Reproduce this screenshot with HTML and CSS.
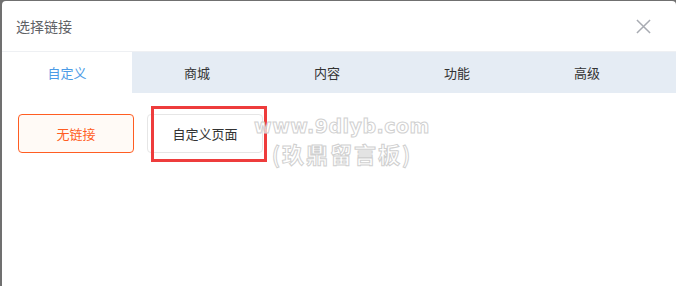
FILE: index.html
```html
<!DOCTYPE html>
<html lang="zh-CN">
<head>
    <meta charset="UTF-8">
    <title>选择链接</title>
    <link rel="stylesheet" href="styles.css">
</head>
<body>
    <div class="dialog">
        <div class="dialog-header">
            <span class="dialog-title">选择链接</span>
            <svg class="close" width="16" height="16" viewBox="0 0 16 16">
                <path d="M1 1 L15 15 M15 1 L1 15" stroke="#a8abb2" stroke-width="1.6" fill="none"/>
            </svg>
        </div>
        <div class="tabs">
            <div class="tab active">自定义</div>
            <div class="tab">商城</div>
            <div class="tab">内容</div>
            <div class="tab">功能</div>
            <div class="tab">高级</div>
        </div>
        <div class="links">
            <div class="link-btn selected">无链接</div>
            <div class="link-btn">自定义页面</div>
        </div>
        <div class="mark-box"></div>
        <div class="watermark">
            <div class="wm-url">www.9dlyb.com</div>
            <div class="wm-name">(玖鼎留言板)</div>
        </div>
    </div>
</body>
</html>
```

FILE: styles.css
```css
body {
    margin: 0;
    background-color: #707070;
    font-family: "Noto Sans CJK SC", "Noto Sans", sans-serif;
    height: 286px;
    overflow: hidden;
}
.dialog {
    position: relative;
    margin: 1px 0 0 2px;
    height: 285px;
    background-color: #fff;
    border-radius: 4px 4px 0 0;
}
.dialog-header {
    height: 50px;
    display: flex;
    align-items: center;
    justify-content: space-between;
    padding: 0 25px 0 14px;
    border-bottom: 1px solid #eef0f3;
}
.dialog-title {
    font-size: 14px;
    color: #5f6266;
}
.close {
    width: 15px;
    height: 15px;
}
.tabs {
    display: flex;
    height: 41px;
    background-color: #e5ecf4;
}
.tab {
    width: 130px;
    display: flex;
    align-items: center;
    justify-content: center;
    font-size: 13px;
    color: #333;
}
.tab.active {
    background-color: #fff;
    color: #4c9be6;
}
.links {
    display: flex;
    gap: 13px;
    padding: 21px 16px;
}
.link-btn {
    width: 114px;
    height: 37px;
    border: 1px solid #e6e6e6;
    border-radius: 4px;
    display: flex;
    align-items: center;
    justify-content: center;
    font-size: 13px;
    color: #333;
}
.link-btn.selected {
    border-color: #ff5d22;
    background-color: #fffaf6;
    color: #ff5d22;
}
.mark-box {
    position: absolute;
    left: 149px;
    top: 105px;
    width: 110px;
    height: 50px;
    border: 3px solid #ee3c3c;
}
.watermark {
    position: absolute;
    left: 240px;
    top: 116px;
    width: 200px;
    color: rgba(255, 255, 255, 0.7);
    -webkit-text-stroke: 1px #d0d0d0;
    font-weight: bold;
    text-align: center;
    line-height: 1;
}
.wm-url {
    font-family: "DejaVu Sans", sans-serif;
    font-size: 19px;
    letter-spacing: 0.5px;
}
.wm-name {
    font-size: 22px;
    letter-spacing: 2px;
    margin-top: 6px;
}
```
